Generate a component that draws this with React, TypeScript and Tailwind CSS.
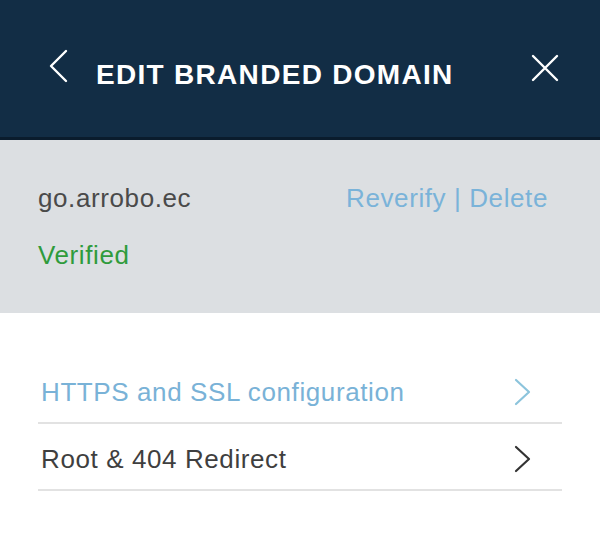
import React from 'react';

function ChevronLeft({ className }: { className?: string }) {
  return (
    <svg viewBox="0 0 20 34" className={className} fill="none" stroke="currentColor" strokeWidth="2.4" strokeLinecap="round" strokeLinejoin="round">
      <path d="M18 2 L3 17 L18 32" />
    </svg>
  );
}

function ChevronRight({ className }: { className?: string }) {
  return (
    <svg viewBox="0 0 18 28" className={className} fill="none" stroke="currentColor" strokeWidth="2.2" strokeLinecap="round" strokeLinejoin="round">
      <path d="M2 2 L15 14 L2 26" />
    </svg>
  );
}

function CloseIcon({ className }: { className?: string }) {
  return (
    <svg viewBox="0 0 28 28" className={className} fill="none" stroke="currentColor" strokeWidth="2.4" strokeLinecap="round">
      <path d="M2 2 L26 26 M26 2 L2 26" />
    </svg>
  );
}

const rows = [
  { label: 'HTTPS and SSL configuration', tone: 'text-[#79b2d7]', icon: 'text-[#8cc4dc]' },
  { label: 'Root & 404 Redirect', tone: 'text-[#3f3f3f]', icon: 'text-[#333333]' },
];

export default function App() {
  return (
    <div className="w-[600px] h-[534px] bg-white overflow-hidden font-['Liberation_Sans',Arial,sans-serif]">
      {/* Header */}
      <div className="h-[140px] bg-[#122d45] border-b-[3px] border-[#0a1c2d] flex items-center pl-[48px] pr-[41px]">
        <ChevronLeft className="w-[20px] h-[34px] text-white mb-[6px]" />
        <h1 className="ml-[28px] mt-[12px] text-[28px] leading-[34px] font-bold tracking-[1.3px] text-white">
          EDIT BRANDED DOMAIN
        </h1>
        <button className="ml-auto mb-[2px] text-white">
          <CloseIcon className="w-[28px] h-[28px]" />
        </button>
      </div>

      {/* Domain summary */}
      <div className="h-[173px] bg-[#dcdfe2] px-[38px] pt-[43px] text-[26px] leading-[30px] tracking-[0.6px]">
        <div className="flex items-center justify-between pr-[14px]">
          <span className="text-[#4a4a4a]">go.arrobo.ec</span>
          <span className="text-[#7ab3d9]">
            Reverify <span className="font-light">|</span> Delete
          </span>
        </div>
        <p className="mt-[27px] text-[#2f9b3c]">Verified</p>
      </div>

      {/* Settings list */}
      <div className="px-[38px] pt-[44px]">
        {rows.map((r) => (
          <div
            key={r.label}
            className="flex items-center justify-between border-b-2 border-[#e2e2e2] pt-[20px] pb-[15px] pl-[3px] pr-[30px]"
          >
            <span className={`text-[26px] leading-[30px] tracking-[0.6px] ${r.tone}`}>{r.label}</span>
            <ChevronRight className={`w-[18px] h-[28px] ${r.icon}`} />
          </div>
        ))}
      </div>
    </div>
  );
}
